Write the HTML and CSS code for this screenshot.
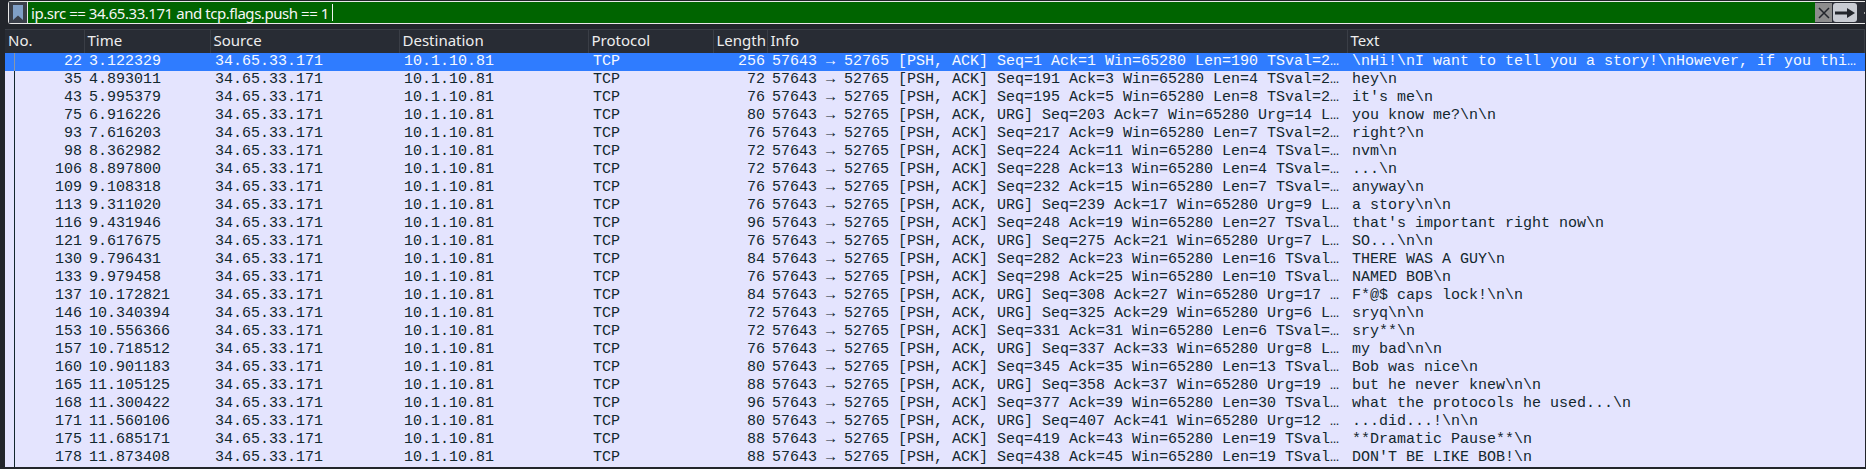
FILE: index.html
```html
<!doctype html>
<html>
    <head>
        <title>Wireshark packet list</title>
        <link rel="stylesheet" href="styles.css">
    </head>
    <body>
        <div class="filter-bar">
            <div class="bookmark-btn">
                <svg width="10" height="15" viewBox="0 0 10 15"><path d="M0 0H10V15L5 10.5L0 15Z" fill="#7f9fc6"/></svg>
            </div>
            <div class="filter-input">
                <span class="filter-text">ip.src == 34.65.33.171 and tcp.flags.push == 1</span>
                <span class="caret"></span>
            </div>
            <div class="clear-btn">
                <svg width="12" height="12" viewBox="0 0 12 12"><path d="M1 1L11 11M11 1L1 11" stroke="#23262c" stroke-width="1.5"/></svg>
            </div>
            <div class="apply-btn">
                <svg width="20" height="10" viewBox="0 0 20 10"><path d="M0 3.5H12V0L20 5L12 10V6.500H0Z" fill="#23262c"/></svg>
            </div>
            <div class="more-tick"></div>
        </div>

        <table class="packets">
            <colgroup>
                <col class="c-no"><col class="c-time"><col class="c-addr"><col class="c-addr">
                <col class="c-proto"><col class="c-len"><col class="c-info"><col>
            </colgroup>
            <thead>
                <tr>
                    <th>No.</th><th>Time</th><th>Source</th><th>Destination</th>
                    <th>Protocol</th><th>Length</th><th>Info</th><th>Text</th>
                </tr>
            </thead>
            <tbody>
                <tr class="selected"><td class="num first">22</td><td>3.122329</td><td>34.65.33.171</td><td>10.1.10.81</td><td>TCP</td><td class="num">256</td><td>57643 → 52765 [PSH, ACK] Seq=1 Ack=1 Win=65280 Len=190 TSval=2…</td><td>\nHi!\nI want to tell you a story!\nHowever, if you thi…</td></tr>
                <tr><td class="num first">35</td><td>4.893011</td><td>34.65.33.171</td><td>10.1.10.81</td><td>TCP</td><td class="num">72</td><td>57643 → 52765 [PSH, ACK] Seq=191 Ack=3 Win=65280 Len=4 TSval=2…</td><td>hey\n</td></tr>
                <tr><td class="num first">43</td><td>5.995379</td><td>34.65.33.171</td><td>10.1.10.81</td><td>TCP</td><td class="num">76</td><td>57643 → 52765 [PSH, ACK] Seq=195 Ack=5 Win=65280 Len=8 TSval=2…</td><td>it's me\n</td></tr>
                <tr><td class="num first">75</td><td>6.916226</td><td>34.65.33.171</td><td>10.1.10.81</td><td>TCP</td><td class="num">80</td><td>57643 → 52765 [PSH, ACK, URG] Seq=203 Ack=7 Win=65280 Urg=14 L…</td><td>you know me?\n\n</td></tr>
                <tr><td class="num first">93</td><td>7.616203</td><td>34.65.33.171</td><td>10.1.10.81</td><td>TCP</td><td class="num">76</td><td>57643 → 52765 [PSH, ACK] Seq=217 Ack=9 Win=65280 Len=7 TSval=2…</td><td>right?\n</td></tr>
                <tr><td class="num first">98</td><td>8.362982</td><td>34.65.33.171</td><td>10.1.10.81</td><td>TCP</td><td class="num">72</td><td>57643 → 52765 [PSH, ACK] Seq=224 Ack=11 Win=65280 Len=4 TSval=…</td><td>nvm\n</td></tr>
                <tr><td class="num first">106</td><td>8.897800</td><td>34.65.33.171</td><td>10.1.10.81</td><td>TCP</td><td class="num">72</td><td>57643 → 52765 [PSH, ACK] Seq=228 Ack=13 Win=65280 Len=4 TSval=…</td><td>...\n</td></tr>
                <tr><td class="num first">109</td><td>9.108318</td><td>34.65.33.171</td><td>10.1.10.81</td><td>TCP</td><td class="num">76</td><td>57643 → 52765 [PSH, ACK] Seq=232 Ack=15 Win=65280 Len=7 TSval=…</td><td>anyway\n</td></tr>
                <tr><td class="num first">113</td><td>9.311020</td><td>34.65.33.171</td><td>10.1.10.81</td><td>TCP</td><td class="num">76</td><td>57643 → 52765 [PSH, ACK, URG] Seq=239 Ack=17 Win=65280 Urg=9 L…</td><td>a story\n\n</td></tr>
                <tr><td class="num first">116</td><td>9.431946</td><td>34.65.33.171</td><td>10.1.10.81</td><td>TCP</td><td class="num">96</td><td>57643 → 52765 [PSH, ACK] Seq=248 Ack=19 Win=65280 Len=27 TSval…</td><td>that's important right now\n</td></tr>
                <tr><td class="num first">121</td><td>9.617675</td><td>34.65.33.171</td><td>10.1.10.81</td><td>TCP</td><td class="num">76</td><td>57643 → 52765 [PSH, ACK, URG] Seq=275 Ack=21 Win=65280 Urg=7 L…</td><td>SO...\n\n</td></tr>
                <tr><td class="num first">130</td><td>9.796431</td><td>34.65.33.171</td><td>10.1.10.81</td><td>TCP</td><td class="num">84</td><td>57643 → 52765 [PSH, ACK] Seq=282 Ack=23 Win=65280 Len=16 TSval…</td><td>THERE WAS A GUY\n</td></tr>
                <tr><td class="num first">133</td><td>9.979458</td><td>34.65.33.171</td><td>10.1.10.81</td><td>TCP</td><td class="num">76</td><td>57643 → 52765 [PSH, ACK] Seq=298 Ack=25 Win=65280 Len=10 TSval…</td><td>NAMED BOB\n</td></tr>
                <tr><td class="num first">137</td><td>10.172821</td><td>34.65.33.171</td><td>10.1.10.81</td><td>TCP</td><td class="num">84</td><td>57643 → 52765 [PSH, ACK, URG] Seq=308 Ack=27 Win=65280 Urg=17 …</td><td>F*@$ caps lock!\n\n</td></tr>
                <tr><td class="num first">146</td><td>10.340394</td><td>34.65.33.171</td><td>10.1.10.81</td><td>TCP</td><td class="num">72</td><td>57643 → 52765 [PSH, ACK, URG] Seq=325 Ack=29 Win=65280 Urg=6 L…</td><td>sryq\n\n</td></tr>
                <tr><td class="num first">153</td><td>10.556366</td><td>34.65.33.171</td><td>10.1.10.81</td><td>TCP</td><td class="num">72</td><td>57643 → 52765 [PSH, ACK] Seq=331 Ack=31 Win=65280 Len=6 TSval=…</td><td>sry**\n</td></tr>
                <tr><td class="num first">157</td><td>10.718512</td><td>34.65.33.171</td><td>10.1.10.81</td><td>TCP</td><td class="num">76</td><td>57643 → 52765 [PSH, ACK, URG] Seq=337 Ack=33 Win=65280 Urg=8 L…</td><td>my bad\n\n</td></tr>
                <tr><td class="num first">160</td><td>10.901183</td><td>34.65.33.171</td><td>10.1.10.81</td><td>TCP</td><td class="num">80</td><td>57643 → 52765 [PSH, ACK] Seq=345 Ack=35 Win=65280 Len=13 TSval…</td><td>Bob was nice\n</td></tr>
                <tr><td class="num first">165</td><td>11.105125</td><td>34.65.33.171</td><td>10.1.10.81</td><td>TCP</td><td class="num">88</td><td>57643 → 52765 [PSH, ACK, URG] Seq=358 Ack=37 Win=65280 Urg=19 …</td><td>but he never knew\n\n</td></tr>
                <tr><td class="num first">168</td><td>11.300422</td><td>34.65.33.171</td><td>10.1.10.81</td><td>TCP</td><td class="num">96</td><td>57643 → 52765 [PSH, ACK] Seq=377 Ack=39 Win=65280 Len=30 TSval…</td><td>what the protocols he used...\n</td></tr>
                <tr><td class="num first">171</td><td>11.560106</td><td>34.65.33.171</td><td>10.1.10.81</td><td>TCP</td><td class="num">80</td><td>57643 → 52765 [PSH, ACK, URG] Seq=407 Ack=41 Win=65280 Urg=12 …</td><td>...did...!\n\n</td></tr>
                <tr><td class="num first">175</td><td>11.685171</td><td>34.65.33.171</td><td>10.1.10.81</td><td>TCP</td><td class="num">88</td><td>57643 → 52765 [PSH, ACK] Seq=419 Ack=43 Win=65280 Len=19 TSval…</td><td>**Dramatic Pause**\n</td></tr>
                <tr><td class="num first">178</td><td>11.873408</td><td>34.65.33.171</td><td>10.1.10.81</td><td>TCP</td><td class="num">88</td><td>57643 → 52765 [PSH, ACK] Seq=438 Ack=45 Win=65280 Len=19 TSval…</td><td>DON'T BE LIKE BOB!\n</td></tr>
            </tbody>
        </table>
    </body>
</html>
```

FILE: styles.css
```css
html, body {
    height: 469px;
    overflow: hidden;
}

body {
    margin: 0;
    padding: 1px 1px 0 5px;
    box-sizing: border-box;
    background-color: #22252b;
    font-family: "Noto Sans", sans-serif;
}

.filter-bar {
    display: flex;
    align-items: stretch;
    height: 23px;
    margin-left: 3px;
    box-sizing: border-box;
    border: 1px solid #e8e8e8;
    border-right: none;
    border-radius: 3px 0 0 3px;
    background-color: #2b2e36;
}

.bookmark-btn {
    display: flex;
    align-items: center;
    justify-content: center;
    width: 18px;
    background-color: #3a3f49;
    border-right: 1px solid #e8e8e8;
}

.filter-input {
    flex: 1;
    display: flex;
    align-items: center;
    padding-left: 3px;
    background-color: #006400;
    color: #f6f6f6;
    font-size: 15px;
    letter-spacing: -0.45px;
}

.caret {
    width: 1px;
    height: 17px;
    margin-left: 3px;
    background-color: #f2f2f2;
}

.clear-btn, .apply-btn {
    display: flex;
    align-items: center;
    justify-content: center;
    margin: 1px 0;
}

.clear-btn {
    width: 17px;
    background-color: #8d8d8d;
}

.apply-btn {
    width: 24px;
    margin-left: 1px;
    border-radius: 3px;
    background-color: #c9ccd3;
}

.more-tick {
    align-self: center;
    width: 1px;
    height: 2px;
    margin-left: 7px;
    background-color: #a8a8a8;
}

.packets {
    width: 1860px;
    margin-top: 5px;
    table-layout: fixed;
    border-collapse: collapse;
}

.c-no { width: 79px; }
.c-time { width: 126px; }
.c-addr { width: 189px; }
.c-proto { width: 125px; }
.c-len { width: 54px; }
.c-info { width: 580px; }

.packets th {
    height: 23px;
    padding: 0 0 2px 3px;
    box-sizing: border-box;
    background-color: #282c34;
    border-top: 1px solid #3a3e46;
    border-right: 1px solid #3a3e46;
    color: #eeeeee;
    font-size: 15px;
    font-weight: 400;
    text-align: left;
    white-space: nowrap;
    overflow: hidden;
}

.packets td {
    height: 18px;
    padding: 0 0 0 5px;
    box-sizing: border-box;
    background-color: #e4e4fe;
    color: #12272e;
    font-family: "Liberation Mono", monospace;
    font-size: 15px;
    line-height: 18px;
    white-space: nowrap;
    overflow: hidden;
}

.packets td.num {
    padding: 0 2px 0 0;
    text-align: right;
}

/* the conversation bracket line in the gutter */
.packets td.first {
    background-image: linear-gradient(#12272e, #12272e);
    background-size: 1px 100%;
    background-position: 9px 0;
    background-repeat: no-repeat;
}

.packets tr.selected td {
    background-color: #2f7cff;
    color: #f5f8ff;
}

.packets tr.selected td.first {
    background-image: linear-gradient(#8c97a8, #8c97a8);
}
```
